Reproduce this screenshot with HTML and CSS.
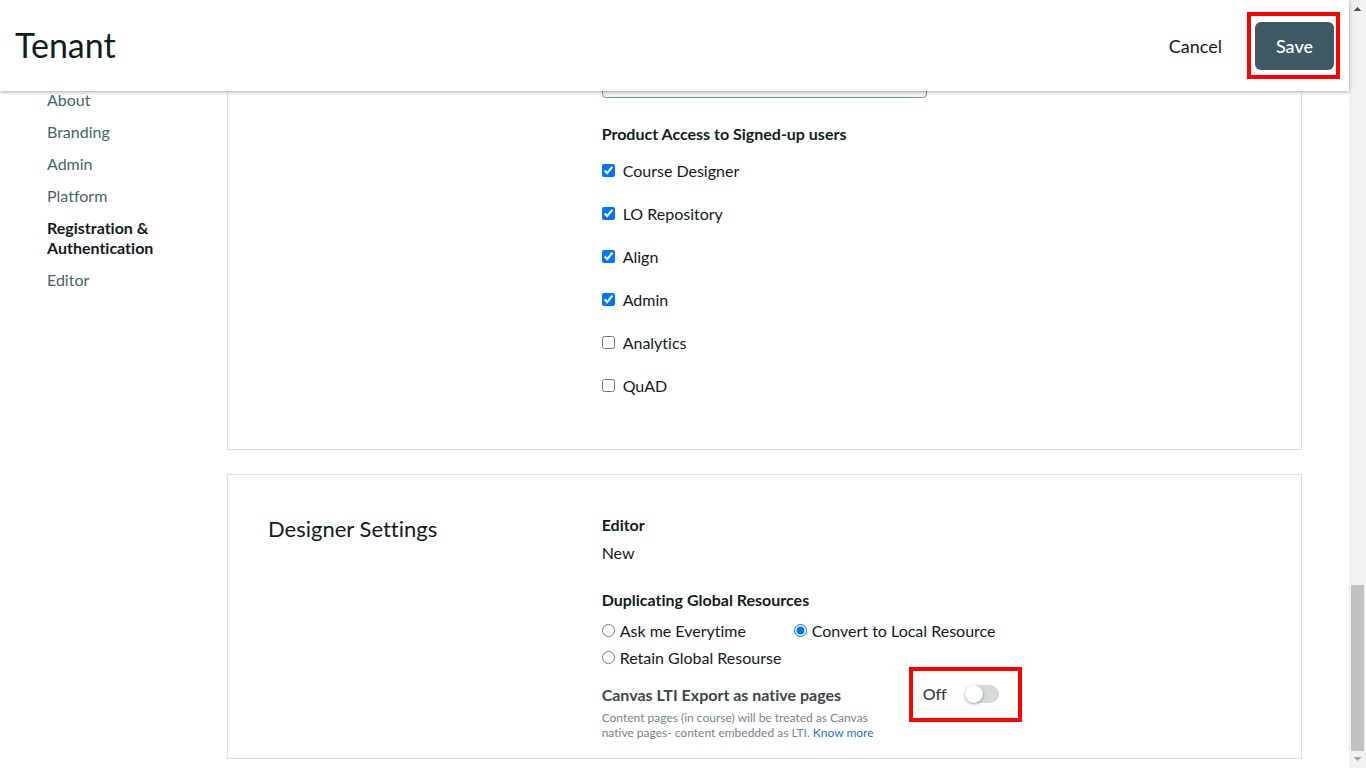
FILE: index.html
```html
<!DOCTYPE html>
<html lang="en">
<head>
<meta charset="utf-8">
<meta name="viewport" content="width=device-width, initial-scale=1">
<title>Tenant</title>
<link rel="stylesheet" href="styles.css">
</head>
<body>
<div class="app">
  <div class="page">
    <header class="topbar">
      <h1 class="topbar-title">Tenant</h1>
      <div class="topbar-actions">
        <button type="button" class="btn btn-text">Cancel</button>
        <div class="highlight highlight-save"><button type="button" class="btn btn-primary">Save</button></div>
      </div>
    </header>
    <div class="viewport">
      <nav class="sidenav" aria-label="Tenant sections">
        <a class="sidenav-link" href="#about">About</a>
        <a class="sidenav-link" href="#branding">Branding</a>
        <a class="sidenav-link" href="#admin">Admin</a>
        <a class="sidenav-link" href="#platform">Platform</a>
        <a class="sidenav-link is-active" href="#registration" aria-current="true">Registration &amp; Authentication</a>
        <a class="sidenav-link" href="#editor">Editor</a>
      </nav>
      <main class="content">
        <section class="card card-registration" id="registration">
          <div class="card-body">
            <input class="field" type="text" aria-label="Default role">
            <fieldset class="group">
              <legend class="group-title">Product Access to Signed-up users</legend>
              <div class="checks">
                <label class="option check"><input type="checkbox" checked>Course Designer</label>
                <label class="option check"><input type="checkbox" checked>LO Repository</label>
                <label class="option check"><input type="checkbox" checked>Align</label>
                <label class="option check"><input type="checkbox" checked>Admin</label>
                <label class="option check"><input type="checkbox">Analytics</label>
                <label class="option check"><input type="checkbox">QuAD</label>
              </div>
            </fieldset>
          </div>
        </section>
        <section class="card card-designer" id="editor">
          <h2 class="card-title">Designer Settings</h2>
          <div class="card-body">
            <h3 class="group-title">Editor</h3>
            <p class="value">New</p>
            <fieldset class="group group-duplicating">
              <legend class="group-title">Duplicating Global Resources</legend>
              <div class="radios">
                <label class="option radio"><input type="radio" name="duplicate">Ask me Everytime</label>
                <label class="option radio"><input type="radio" name="duplicate" checked>Convert to Local Resource</label>
                <label class="option radio"><input type="radio" name="duplicate">Retain Global Resourse</label>
              </div>
            </fieldset>
            <div class="setting">
              <div class="setting-text">
                <h3 class="group-title setting-title">Canvas LTI Export as native pages</h3>
                <p class="hint">Content pages (in course) will be treated as Canvas native pages- content embedded as LTI. <a class="hint-link" href="#more">Know more</a></p>
              </div>
              <label class="toggle highlight highlight-toggle">Off<input class="switch" type="checkbox" role="switch"></label>
            </div>
          </div>
        </section>
      </main>
    </div>
  </div>
  <div class="scrollbar" aria-hidden="true">
    <svg class="scroll-arrow" viewBox="0 0 17 17"><path d="M8 7h1v1h1v1h1v1h1v1H5v-1h1V9h1V8h1z" fill="#505050"/></svg>
    <div class="scroll-before"></div>
    <div class="scroll-thumb"></div>
    <svg class="scroll-arrow" viewBox="0 0 17 17"><path d="M5 6h7v1h-1v1h-1v1H9v1H8V9H7V8H6V7H5z" fill="#a3a3a3"/></svg>
  </div>
</div>
</body>
</html>
```
FILE: styles.css
```css
* { box-sizing: border-box; }

body {
  margin: 0;
  background: #fff;
  color: #0f1c20;
  font: 16px/20px Lato, "Open Sans", sans-serif;
  font-variant-ligatures: none;
}

h1, h2, h3, p { margin: 0; }

.app { display: flex; height: 100vh; overflow: hidden; }
.page { flex: 1; min-width: 0; display: flex; flex-direction: column; }

/* Header */
.topbar {
  position: relative;
  z-index: 1;
  display: flex;
  flex: none;
  align-items: center;
  justify-content: space-between;
  padding: 22px 15px 21px;
  background: #fff;
  box-shadow: 0 1px 4px rgba(0, 0, 0, 0.35);
}
.topbar-title { font-size: 34px; line-height: 46px; padding-bottom: 2px; font-weight: 400; }
.topbar-actions { display: flex; align-items: center; gap: 16px; }

.btn {
  height: 48px;
  border: 0;
  border-radius: 6px;
  background: none;
  color: inherit;
  font: 18px/24px Lato, "Open Sans", sans-serif;
  cursor: pointer;
}
.btn-text { padding: 0 17px; }
.btn-primary { padding: 0 21px; background: #3d5a64; color: #fff; font-weight: 500; }

/* Red callout frames */
.highlight { position: relative; }
.highlight::before {
  content: "";
  position: absolute;
  border: 4px solid #f00;
  pointer-events: none;
}
.highlight-save::before { inset: -10px -6px -9px -8px; }
.highlight-toggle::before { inset: -18px -23px -19px -14px; }

/* Scrolled region */
.viewport {
  flex: 1;
  min-height: 0;
  display: flex;
  overflow: hidden;
  padding-right: 47px;
}

.sidenav {
  flex: none;
  width: 227px;
  display: flex;
  flex-direction: column;
  gap: 12px;
  margin-top: -1px;
  padding: 0 48px 0 47px;
}
.sidenav-link { color: #48626b; text-decoration: none; }
.sidenav-link.is-active { color: #0f1c20; font-weight: 700; }

.content {
  flex: 1;
  min-width: 0;
  display: flex;
  flex-direction: column;
  gap: 24px;
  margin-top: -40px;
}

.card {
  display: grid;
  grid-template-columns: 1fr 2fr;
  border: 1px solid #dcdfe0;
  padding: 40px 32px 18px 40px;
}
.card-registration { padding-top: 6px; padding-bottom: 53px; }
.card-registration .card-body { grid-column: 2; }
.card-title { font-size: 22px; line-height: 28px; font-weight: 400; }

.field {
  display: block;
  width: 325px;
  height: 40px;
  border: 1px solid #7e929a;
  border-radius: 4px;
  background: #f5f6f7;
}

.group { min-width: 0; margin: 26px 0 0; border: 0; padding: 0; }
.group-duplicating { margin-top: 27px; }
.group-title { padding: 0; font-size: 16px; line-height: 20px; font-weight: 700; }
.value { margin-top: 8px; }

.option { display: flex; align-items: center; }
.option input { flex: none; width: 13px; height: 13px; margin: 0 0 1px; }
.checks { display: flex; flex-direction: column; gap: 23px; margin-top: 17px; }
.check { gap: 8px; }
.radios {
  display: grid;
  grid-template-columns: 192px max-content;
  row-gap: 7px;
  margin-top: 11px;
}
.radio { gap: 5px; }

.setting { display: flex; gap: 41px; margin-top: 17px; }
.setting-text { width: 280px; }
.setting-title { color: #3a474b; }
.hint { margin-top: 5px; color: #74858a; font-size: 12px; line-height: 15px; }
.hint-link { color: #1f74cc; text-decoration: none; }

.toggle {
  display: flex;
  align-items: center;
  align-self: flex-start;
  gap: 18px;
  color: #2f3b3f;
  font-size: 16px;
  line-height: 18px;
  font-weight: 500;
}
.switch {
  appearance: none;
  width: 34px;
  height: 18px;
  margin: 0;
  border-radius: 9px;
  background: #d5dadd;
}
.switch::before {
  content: "";
  display: block;
  width: 18px;
  height: 18px;
  border-radius: 50%;
  background: #fff;
  box-shadow: 0 1px 3px rgba(0, 0, 0, 0.4);
}

/* Scrollbar */
.scrollbar {
  flex: none;
  width: 17px;
  display: flex;
  flex-direction: column;
  background: #f1f1f1;
}
.scroll-arrow { flex: none; width: 17px; height: 17px; }
.scroll-before { flex: 568; }
.scroll-thumb { flex: 166; margin: 0 2px; background: #c1c1c1; }
```
